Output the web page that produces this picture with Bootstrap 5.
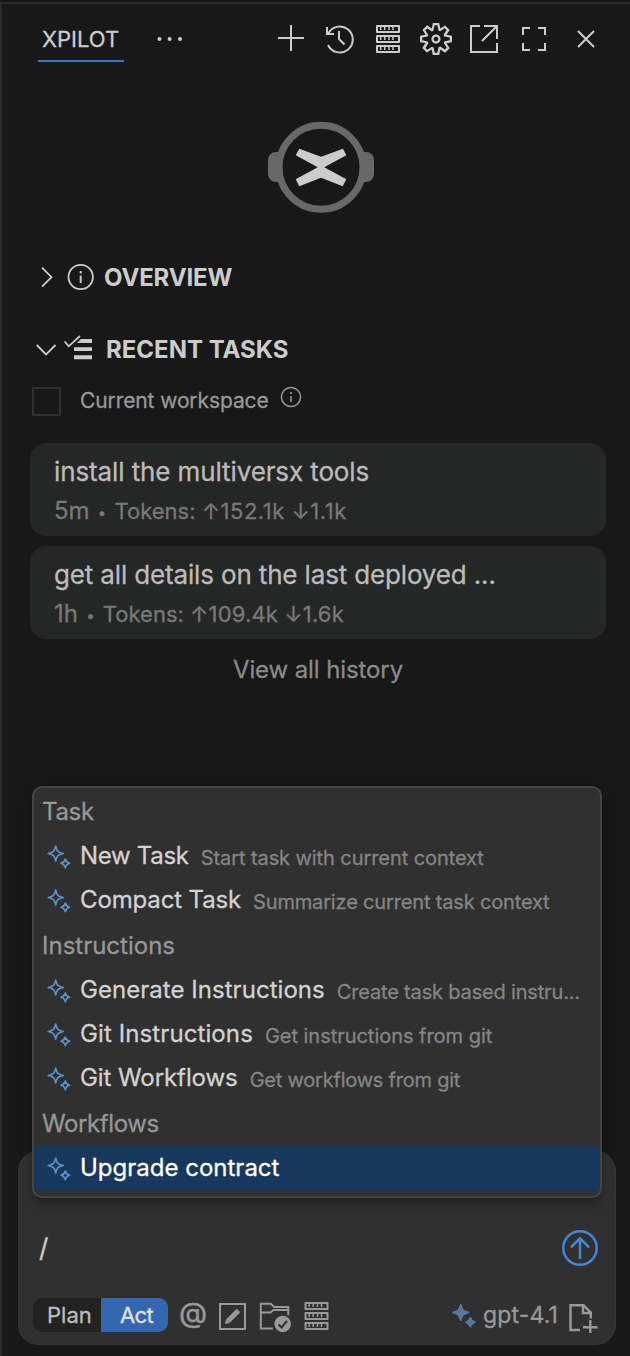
<!doctype html>
<html lang="en" data-bs-theme="dark">
<head>
<meta charset="utf-8">
<meta name="viewport" content="width=device-width, initial-scale=1">
<title>XPILOT</title>
<link href="https://cdn.jsdelivr.net/npm/bootstrap@5.3.0/dist/css/bootstrap.min.css" rel="stylesheet">
<style>
body{background:#181818;color:#ccc;font-family:Inter,sans-serif;font-size:24px;overflow:hidden;-webkit-text-stroke:.3px}
svg{display:block;flex:none;fill:none;stroke:currentColor;stroke-width:2}
.panel{height:1354px;margin-top:2px;border-left:2px solid #2b2b2b;border-top:2px solid #2b2b2b}
.topbar{height:60px;padding-left:36px;padding-right:18px}
.tab-title{margin-top:12px;padding:2px 4px 0;width:86px;font-size:22px;line-height:42px;border-bottom:2px solid #3078cc;white-space:nowrap}
.tools{margin-top:11px}
.more{margin:11px 0 0 26px}
.logo{margin:46px 0 0 248px}
.section{height:72px;font-size:24px;font-weight:700;-webkit-text-stroke:0}
.section.first{margin-top:16px}
.check-row{height:32px;margin-top:-1px;margin-left:30px;font-size:21px;letter-spacing:-.1px;color:#989898}
.box{width:29px;height:29px;border:2px solid #303030;border-radius:1px}
.task-card{height:93px;margin:0 24px 10px 28px;padding:9px 24px 0;border-radius:16px;background:#252726;color:#bbb;font-size:26px;line-height:40px;white-space:nowrap}
.task-meta{line-height:38px;font-size:22px;color:#777978}
.task-meta .age{font-size:24px}
.task-meta .dot{display:inline-block;width:12.5px;font-size:15px;text-align:center;vertical-align:1px;line-height:20px}
.history{margin-top:12px;width:632px;line-height:38px;letter-spacing:-.1px;color:#8a8a8a}
.composer{margin:462px 14px 0 16px;height:194px;border-radius:20px;background:#303030;border:1px solid #353535}
.menu{left:13px;top:-366px;width:570px;height:412px;border:2px solid #454545;border-radius:10px;background:#303030;box-shadow:0 6px 12px -2px rgba(0,0,0,.4);overflow:hidden}
.menu-head{height:46px;line-height:48px;padding-left:8px;color:#979797}
.menu-row{height:44px;line-height:44px;padding-left:10px;color:#d2d2d2;white-space:nowrap}
.menu-row svg{color:#5a91c9;stroke-width:1.7}
.menu-row .hint{font-size:20px;line-height:48px;margin-left:12px;color:#858585;letter-spacing:-.08px}
.menu-row.on{background:#17385c;color:#fff}
.slash{left:20px;top:78px;line-height:36px;font-size:26px}
.send{right:16px;top:77px;color:#4488d4}
.foot{position:relative;padding:144px 16px 0 14px;color:#999}
.mode{width:135px;height:34px;border-radius:9px;background:#222;overflow:hidden;font-size:22px;line-height:35px}
.mode .half{width:68px;padding-left:14px;color:#bdbdbd}
.mode .half.act{width:67px;padding-left:19px;background:#3368b0;color:#e0e0e0;letter-spacing:-.6px}
.model{font-size:23px;line-height:38px;letter-spacing:.15px}
</style>
</head>
<body>
<svg width="0" height="0" class="position-absolute">
  <symbol id="rulers" viewBox="0 0 48 48"><path d="M14 11h22v6H14zM14 21h22v6H14zM14 31h22v6H14z" stroke-linejoin="round"/><path stroke-width="1.5" d="M17.7 12v3M21.7 12v3M26 12v3M30 12v3M17.7 22v3M21.7 22v3M26 22v3M30 22v3M17.7 32v3M21.7 32v3M26 32v3M30 32v3"/></symbol>
  <symbol id="sparkle" viewBox="0 0 34 44"><path stroke-linejoin="round" d="M11.7 12c1.2 5.300 2.200 6.300 7.500 7.500c-5.300 1.200-6.300 2.200-7.500 7.500c-1.200-5.300-2.200-6.300-7.500-7.500c5.300-1.200 6.300-2.200 7.500-7.500z"/><path stroke-linejoin="round" d="M21.300 25c.7 2.800 1.500 3.600 4.300 4.300c-2.800.7-3.600 1.500-4.300 4.300c-.7-2.800-1.500-3.600-4.300-4.300c2.800-.7 3.600-1.500 4.300-4.300z"/></symbol>
</svg>
<div class="panel">
  <header class="topbar d-flex align-items-start">
    <div class="tab-title">XPILOT</div>
    <svg class="more" width="40" height="48" viewBox="0 0 40 48"><g fill="currentColor" stroke="none"><circle cx="9.500" cy="24" r="2"/><circle cx="19.600" cy="24" r="2"/><circle cx="30" cy="24" r="2"/></g></svg>
    <div class="tools d-flex ms-auto">
      <svg width="48" height="48"><path d="M24 10v26M11 23h26"/></svg>
      <svg width="48" height="48"><path d="M12 12v7h7M13 30A13 13 0 1 0 13 19M24 16v8l5.500 5.500"/></svg>
      <svg width="48" height="48"><use href="#rulers"/></svg>
      <svg width="48" height="48"><path transform="translate(6.700 5.700) scale(2.286)" fill="currentColor" stroke="none" d="M9.100 4.400L8.600 2H7.400l-.5 2.400-.7.300-2-1.300-.9.800 1.300 2-.2.700-2.400.5v1.200l2.400.5.3.8-1.300 2 .8.800 2-1.300.8.300.4 2.300h1.200l.5-2.400.8-.3 2 1.300.8-.8-1.300-2 .3-.8 2.300-.4V7.400l-2.400-.5-.3-.8 1.300-2-.8-.8-2 1.300-.7-.2zM9.400 1l.5 2.400L12 2.100l2 2-1.400 2.100 2.400.4v2.800l-2.400.5L14 12l-2 2-2.100-1.400-.5 2.400H6.600l-.5-2.400L4 13.900l-2-2 1.400-2.100L1 9.400V6.600l2.400-.5L2.100 4l2-2 2.100 1.400.4-2.400h2.800zm.6 7c0 1.100-.9 2-2 2s-2-.9-2-2 .9-2 2-2 2 .9 2 2zM8 9c.6 0 1-.4 1-1s-.4-1-1-1-1 .4-1 1 .4 1 1 1z"/></svg>
      <svg width="49" height="48"><path d="M21 11h-9v26h26v-9M25 11h13v13M23 26L38 11"/></svg>
      <svg width="52" height="48"><path d="M15 20v-7h7M30 13h7v7M37 28v7h-7M22 35h-7v-7"/></svg>
      <svg width="52" height="48"><path d="M18 16l16 16M34 16L18 32"/></svg>
    </div>
  </header>

  <svg class="logo" width="146" height="116" viewBox="0 0 146 116">
    <g stroke="none" fill="#686868"><rect x="18" y="42" width="30" height="30" rx="8"/><rect x="94" y="42" width="30" height="30" rx="8"/></g>
    <circle cx="71" cy="57.300" r="42" fill="#181818" stroke="#686868" stroke-width="7"/>
    <path stroke="none" fill="#ccc" d="M49.300 38.700L71 46.700L93 38.700L96.300 45.300L74.300 57.300L96.300 69.300L92.700 76.300L71 67.700L49.300 76.300L45.700 69.300L67.700 57.300L45.700 45.300z"/>
  </svg>

  <div class="section first d-flex align-items-center">
    <svg width="102" height="48"><path stroke-width="1.800" d="M40 13.700l9.500 9.500-9.500 9.500"/><circle cx="78.700" cy="23" r="12.200" stroke-width="1.800"/><path d="M78.700 21.500v7.500M78.700 17v2.500"/></svg>
    <span style="letter-spacing:-.15px">OVERVIEW</span>
  </div>
  <div class="section d-flex align-items-center">
    <svg width="104" height="48"><path stroke-width="1.800" d="M34.700 19l9.400 9.400L53.500 19M62.700 15.500l4 4.800L78 10"/><path fill="currentColor" stroke="none" d="M79 13h11v4H75zM72 21.300h18V25H72zM72 29.300h18v4H72z"/></svg>
    <span>RECENT TASKS</span>
  </div>
  <div class="check-row d-flex align-items-center">
    <span class="box"></span>
    <span style="margin-left:19px">Current workspace</span>
    <svg width="32" height="32" class="ms-1"><circle cx="18" cy="12" r="9.600" stroke-width="1.500"/><path stroke-width="1.600" d="M18 11v6M18 7v2"/></svg>
  </div>

  <div class="task-card" style="margin-top:26px">
    <div style="letter-spacing:-.11px">install the multiversx tools</div>
    <div class="task-meta"><span class="age">5m</span> <span class="dot">•</span> <span>Tokens: </span><span style="letter-spacing:.5px">↑152.1k ↓1.1k</span></div>
  </div>
  <div class="task-card">
    <div style="letter-spacing:-.15px">get all details on the last deployed ...</div>
    <div class="task-meta"><span class="age">1h</span> <span class="dot">•</span> <span>Tokens: </span><span style="letter-spacing:.15px">↑109.4k ↓1.6k</span></div>
  </div>
  <div class="history text-center">View all history</div>

  <div class="composer position-relative">
    <div class="slash position-absolute">/</div>
    <svg class="send position-absolute" width="38" height="38"><circle cx="19" cy="19" r="16.700" stroke-width="2.500"/><path stroke-width="2.500" d="M19 30V9.500M9.800 18.500L19 9.300l9.200 9.200"/></svg>
    <div class="foot d-flex align-items-center">
      <div class="mode d-flex"><div class="half">Plan</div><div class="half act">Act</div></div>
      <svg width="176" height="36" viewBox="168 1296 176 36">
        <text x="179" y="1322" font-size="28" fill="currentColor" stroke="currentColor" stroke-width=".5" textLength="28" lengthAdjust="spacingAndGlyphs">@</text>
        <path d="M220 1303h25v25h-25z"/><path d="M228 1320l10.500-10.500" stroke-width="5"/><path d="M225 1323l1-5 4 4z" fill="currentColor" stroke="none"/>
        <path d="M273 1327.500h-12.200v-24.700h10l3.500 3.200h14v8.500M261 1311.500h9.500l3-2.500h14.500"/>
        <circle cx="282.700" cy="1323" r="8.300" fill="currentColor" stroke="none"/><path stroke="#303030" d="M278.500 1323.500l3 3 5.500-6.500"/>
        <use href="#rulers" x="291.500" y="1291" width="48" height="48"/>
      </svg>
      <svg class="ms-auto" width="34" height="36" viewBox="0 4 34 36" style="color:#54799f"><use href="#sparkle" width="34" height="44" fill="currentColor"/></svg>
      <span class="model">gpt-4.1</span>
      <svg width="41" height="36" viewBox="558 1295 41 36"><path stroke-width="2.400" d="M580 1328h-9.500v-24.700h13l7.300 7.200v6M583 1303v8h8M590.300 1318v14.500M583 1325.300h14.500"/></svg>
    </div>

    <div class="menu position-absolute">
      <div class="menu-head" style="letter-spacing:-.3px">Task</div>
      <div class="menu-row d-flex"><svg width="36" height="44"><use href="#sparkle" width="34" height="44"/></svg><span style="letter-spacing:-.3px">New Task</span><span class="hint">Start task with current context</span></div>
      <div class="menu-row d-flex"><svg width="36" height="44"><use href="#sparkle" width="34" height="44"/></svg><span style="letter-spacing:-.14px">Compact Task</span><span class="hint" style="letter-spacing:-.16px">Summarize current task context</span></div>
      <div class="menu-head">Instructions</div>
      <div class="menu-row d-flex"><svg width="36" height="44"><use href="#sparkle" width="34" height="44"/></svg><span style="letter-spacing:.04px">Generate Instructions</span><span class="hint" style="letter-spacing:-.17px">Create task based instru...</span></div>
      <div class="menu-row d-flex"><svg width="36" height="44"><use href="#sparkle" width="34" height="44"/></svg><span style="letter-spacing:.1px">Git Instructions</span><span class="hint" style="letter-spacing:-.03px">Get instructions from git</span></div>
      <div class="menu-row d-flex"><svg width="36" height="44"><use href="#sparkle" width="34" height="44"/></svg><span style="letter-spacing:-.08px">Git Workflows</span><span class="hint" style="letter-spacing:-.22px">Get workflows from git</span></div>
      <div class="menu-head" style="letter-spacing:-.4px">Workflows</div>
      <div class="menu-row on d-flex"><svg width="36" height="44"><use href="#sparkle" width="34" height="44"/></svg><span>Upgrade contract</span></div>
    </div>
  </div>
</div>
<script src="https://cdn.jsdelivr.net/npm/bootstrap@5.3.0/dist/js/bootstrap.bundle.min.js"></script>
</body>
</html>
